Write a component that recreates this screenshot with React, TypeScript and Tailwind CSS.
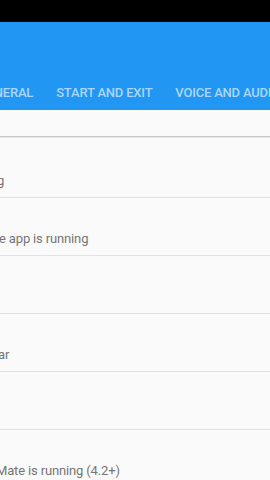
import React from "react";

export default function App() {
  const rows: { h: string; text: string; ml: string }[] = [
    { h: "h-[60px]", text: "g", ml: "ml-[-3px]" },
    { h: "h-[58px]", text: "e app is running", ml: "ml-[-1px]" },
    { h: "h-[58px]", text: "", ml: "" },
    { h: "h-[58px]", text: "ar", ml: "ml-[-2px]" },
    { h: "h-[58px]", text: "", ml: "" },
    { h: "h-[58px]", text: "Mate is running (4.2+)", ml: "ml-[-4px]" },
  ];
  return (
    <div
      className="w-[270px] h-[480px] overflow-hidden bg-[#fafafa] flex flex-col"
      style={{ fontFamily: "Roboto, 'Liberation Sans', sans-serif" }}
    >
      <div className="h-[22px] bg-black shrink-0" />
      <div className="h-[88px] bg-[#2196f3] shrink-0 flex items-end overflow-hidden">
        <div className="flex gap-[23px] ml-[-22px] pb-[7px] whitespace-nowrap text-[13px] leading-[20px] tracking-[-0.2px] font-medium text-[#acd6fb]">
          <span>GENERAL</span>
          <span>START AND EXIT</span>
          <span>VOICE AND AUDIO</span>
        </div>
      </div>
      <div className="h-[26px] shrink-0" />
      <div className="h-[2px] shrink-0 bg-[#c8c8c8] border-b border-[#e6e6e6]" />
      {rows.map((r, i) => (
        <div
          key={i}
          className={`${r.h} shrink-0 border-b border-[#e2e2e2] flex items-end pb-[6px] overflow-hidden`}
        >
          <span
            className={`${r.ml} whitespace-nowrap text-[13px] leading-[20px] tracking-[-0.15px] text-[#767676]`}
          >
            {r.text}
          </span>
        </div>
      ))}
    </div>
  );
}
